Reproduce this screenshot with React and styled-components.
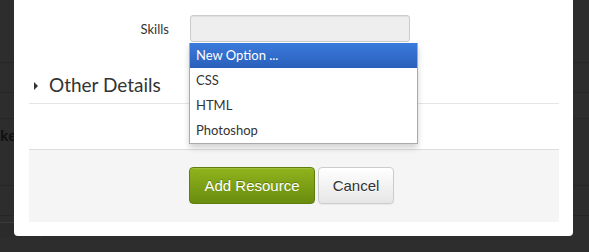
import React from "react";
import styled, { createGlobalStyle } from "styled-components";

const Global = createGlobalStyle`
  html, body { margin: 0; padding: 0; }
  body {
    width: 589px;
    height: 252px;
    overflow: hidden;
    background: #2d2d2d;
    font-family: Lato, "Open Sans", sans-serif;
  }
  #root { position: relative; width: 589px; height: 252px; }
`;

const Backdrop = styled.div`
  display: flex;
  flex-direction: column;
  width: 589px;
  height: 252px;
`;

const BgRow = styled.div`
  height: ${(p) => p.$h}px;
  border-bottom: 1px solid #262626;
  box-sizing: border-box;
  display: flex;
  align-items: flex-start;
  font-family: "Liberation Sans", Arial, sans-serif;
  font-weight: bold;
  font-size: 15px;
  color: #111;
  padding-top: 8px;
`;

const BgTab = styled.div`
  margin-top: 6px;
  width: 40px;
  height: 14px;
  border: 1px solid #3a3a3a;
  border-left: none;
  border-bottom: none;
  border-radius: 0 4px 0 0;
  background: #2b2b2b;
`;

const Modal = styled.div`
  position: absolute;
  left: 14px;
  top: 0;
  width: 559px;
  height: 236px;
  box-sizing: border-box;
  background: #fff;
  border-radius: 0 0 4px 4px;
  padding: 15px 14px 14px 15px;
  display: flex;
  flex-direction: column;
`;

const FormRow = styled.div`
  display: flex;
  align-items: center;
  gap: 21px;
  height: 27px;
  flex-shrink: 0;
`;

const Label = styled.label`
  width: 140px;
  text-align: right;
  font-size: 13px;
  color: #333;
`;

const SelectWrap = styled.div`
  position: relative;
  width: 220px;
  height: 27px;
`;

const SelectBox = styled.div`
  width: 220px;
  height: 27px;
  box-sizing: border-box;
  background: #eeeeee;
  border: 1px solid #cccccc;
  border-radius: 3px;
  box-shadow: inset 0 1px 1px rgba(0, 0, 0, 0.06);
`;

const Menu = styled.ul`
  position: absolute;
  left: -1px;
  top: 28px;
  width: 229px;
  margin: 0;
  padding: 0;
  list-style: none;
  box-sizing: border-box;
  background: #fff;
  border: 1px solid #aaaaaa;
  border-top: none;
  box-shadow: 0 4px 6px rgba(0, 0, 0, 0.18);
  z-index: 2;
`;

const Option = styled.li`
  height: 25px;
  line-height: 25px;
  padding-left: 6px;
  font-size: 13px;
  color: ${(p) => (p.$active ? "#fff" : "#333")};
  background: ${(p) =>
    p.$active ? "linear-gradient(#3b7bdc, #2a5fba)" : "transparent"};
`;

const Section = styled.div`
  display: flex;
  align-items: center;
  height: 62px;
  flex-shrink: 0;
  box-sizing: border-box;
  padding-top: 23px;
  border-bottom: 1px solid #e5e5e5;
  padding-left: 5px;
  gap: 11px;
`;

const Caret = styled.span`
  width: 0;
  height: 0;
  border-top: 4px solid transparent;
  border-bottom: 4px solid transparent;
  border-left: 4px solid #333;
  margin-top: 3px;
`;

const SectionTitle = styled.h3`
  margin: 0;
  font-weight: normal;
  font-size: 19px;
  color: #333;
`;

const Footer = styled.div`
  margin-top: 45px;
  height: 73px;
  flex-shrink: 0;
  box-sizing: border-box;
  background: #f5f5f5;
  border-top: 1px solid #dddddd;
  display: flex;
  justify-content: center;
  align-items: flex-start;
  padding-top: 17px;
  padding-right: 5px;
  gap: 3px;
`;

const Button = styled.button`
  height: 37px;
  width: ${(p) => p.$w}px;
  box-sizing: border-box;
  border-radius: 4px;
  font-family: "Liberation Sans", Arial, sans-serif;
  font-size: 15px;
  padding: 0;
  cursor: pointer;
  color: ${(p) => (p.$primary ? "#fff" : "#333")};
  text-shadow: ${(p) =>
    p.$primary ? "0 -1px 0 rgba(0,0,0,0.25)" : "0 1px 0 rgba(255,255,255,0.7)"};
  background: ${(p) =>
    p.$primary
      ? "linear-gradient(#8fb41c, #6a8c0f)"
      : "linear-gradient(#ffffff, #e6e6e6)"};
  border: 1px solid ${(p) => (p.$primary ? "#5f7f0d" : "#cccccc")};
  box-shadow: ${(p) =>
    p.$primary
      ? "inset 0 1px 0 rgba(255,255,255,0.15)"
      : "inset 0 1px 0 rgba(255,255,255,0.6), 0 1px 1px rgba(0,0,0,0.05)"};
`;

export default function App() {
  return (
    <>
      <Global />
      <Backdrop>
        <BgRow $h={63} />
        <BgRow $h={30} />
        <BgRow $h={26} />
        <BgRow $h={67}>ke</BgRow>
        <BgRow $h={30} />
        <BgTab />
      </Backdrop>
      <Modal>
        <FormRow>
          <Label>Skills</Label>
          <SelectWrap>
            <SelectBox />
            <Menu>
              <Option $active>New Option ...</Option>
              <Option>CSS</Option>
              <Option>HTML</Option>
              <Option>Photoshop</Option>
            </Menu>
          </SelectWrap>
        </FormRow>
        <Section>
          <Caret />
          <SectionTitle>Other Details</SectionTitle>
        </Section>
        <Footer>
          <Button $primary $w={126}>Add Resource</Button>
          <Button $w={76}>Cancel</Button>
        </Footer>
      </Modal>
    </>
  );
}
